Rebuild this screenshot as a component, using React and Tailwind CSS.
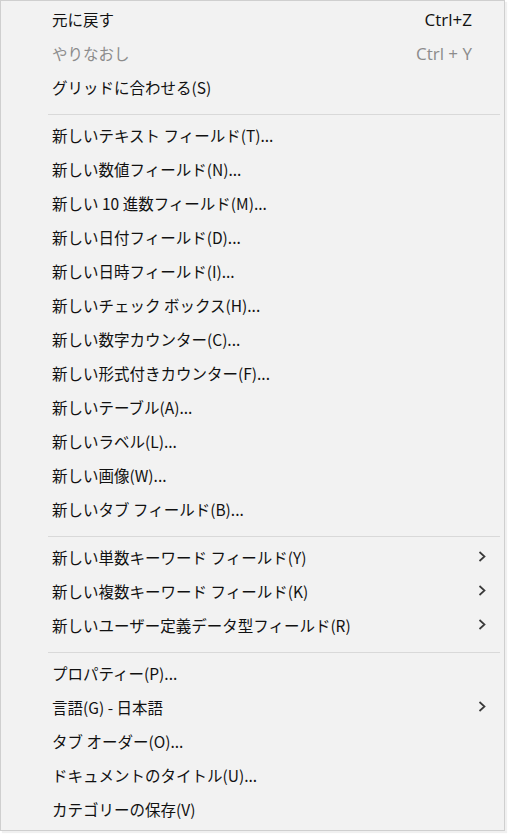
const GROUPS = [
  [
    { label: "元に戻す", shortcut: "Ctrl+Z" },
    { label: "やりなおし", shortcut: "Ctrl + Y", disabled: true },
    { label: "グリッドに合わせる(S)" },
  ],
  [
    { label: "新しいテキスト フィールド(T)..." },
    { label: "新しい数値フィールド(N)..." },
    { label: "新しい 10 進数フィールド(M)..." },
    { label: "新しい日付フィールド(D)..." },
    { label: "新しい日時フィールド(I)..." },
    { label: "新しいチェック ボックス(H)..." },
    { label: "新しい数字カウンター(C)..." },
    { label: "新しい形式付きカウンター(F)..." },
    { label: "新しいテーブル(A)..." },
    { label: "新しいラベル(L)..." },
    { label: "新しい画像(W)..." },
    { label: "新しいタブ フィールド(B)..." },
  ],
  [
    { label: "新しい単数キーワード フィールド(Y)", submenu: true },
    { label: "新しい複数キーワード フィールド(K)", submenu: true },
    { label: "新しいユーザー定義データ型フィールド(R)", submenu: true },
  ],
  [
    { label: "プロパティー(P)..." },
    { label: "言語(G) - 日本語", submenu: true },
    { label: "タブ オーダー(O)..." },
    { label: "ドキュメントのタイトル(U)..." },
    { label: "カテゴリーの保存(V)" },
  ],
];

function SubmenuArrow() {
  return (
    <svg className="ml-auto mr-[2px] -mt-[3px]" width="8" height="11" viewBox="0 0 8 11">
      <polyline
        points="1.5,1 6.5,5.5 1.5,10"
        fill="none"
        stroke="#3a3a3a"
        strokeWidth="1.7"
      />
    </svg>
  );
}

function MenuItem({ item }) {
  const tone = item.disabled ? "text-[#8c8c8c]" : "text-[#111111]";
  return (
    <div className={`flex h-[34px] items-center pl-[51px] pr-[16px] ${tone}`}>
      <span className="whitespace-nowrap">{item.label}</span>
      {item.shortcut && (
        <span className="ml-auto mr-[16px] font-['Open_Sans','Noto_Sans',sans-serif] text-[17px]">
          {item.shortcut}
        </span>
      )}
      {item.submenu && <SubmenuArrow />}
    </div>
  );
}

export default function App() {
  return (
    <div className="h-[834px] w-[508px] bg-white">
      <div className="h-[831px] w-[505px] border border-[#cfcfcf] bg-[#f2f2f2] pt-[2px] font-['Noto_Sans_CJK_JP',sans-serif] text-[15.5px] shadow-[2px_2px_1px_rgba(0,0,0,0.06)]">
        {GROUPS.map((group, gi) => (
          <div key={gi}>
            {gi > 0 && (
              <div className="pb-[4px] pl-[47px] pr-[4px] pt-[9px]">
                <div className="h-px bg-[#d9d9d9]" />
              </div>
            )}
            {group.map((item) => (
              <MenuItem key={item.label} item={item} />
            ))}
          </div>
        ))}
      </div>
    </div>
  );
}
